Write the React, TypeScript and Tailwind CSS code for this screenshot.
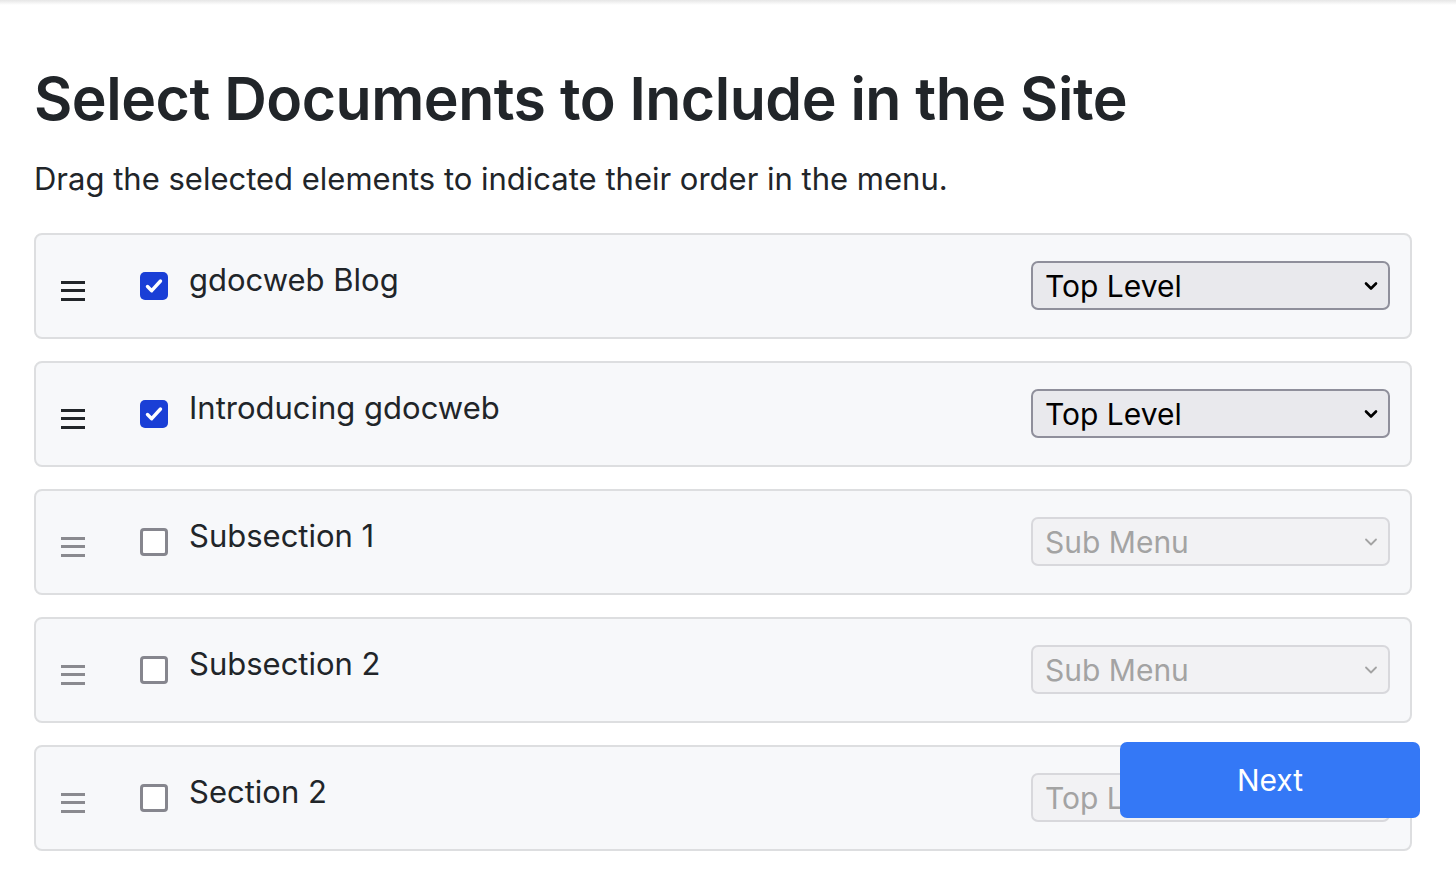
type Doc = { title: string; checked: boolean; level: string }

const docs: Doc[] = [
  { title: 'gdocweb Blog', checked: true, level: 'Top Level' },
  { title: 'Introducing gdocweb', checked: true, level: 'Top Level' },
  { title: 'Subsection 1', checked: false, level: 'Sub Menu' },
  { title: 'Subsection 2', checked: false, level: 'Sub Menu' },
  { title: 'Section 2', checked: false, level: 'Top Level' },
]

function Handle({ active }: { active: boolean }) {
  const color = active ? 'bg-[#212529]' : 'bg-[#8a8a8f]'
  return (
    <div className="mt-[10px] flex w-[24px] flex-col gap-[5.5px]">
      <span className={`h-[3px] w-full ${color}`} />
      <span className={`h-[3px] w-full ${color}`} />
      <span className={`h-[3px] w-full ${color}`} />
    </div>
  )
}

function Checkbox({ checked }: { checked: boolean }) {
  if (checked) {
    return (
      <div className="flex h-[28px] w-[28px] items-center justify-center rounded-[5px] bg-[#1a3fd6]">
        <svg width="22" height="22" viewBox="0 0 22 22" fill="none">
          <path d="M4.5 11.5l4.2 4.2L17.5 6" stroke="white" strokeWidth="3.4" strokeLinecap="round" strokeLinejoin="round" />
        </svg>
      </div>
    )
  }
  return <div className="h-[28px] w-[28px] rounded-[4px] border-[3px] border-[#86868e] bg-white" />
}

function LevelSelect({ value, disabled }: { value: string; disabled: boolean }) {
  return (
    <div
      className={`flex h-[49px] w-[359px] items-center justify-between rounded-[7px] border-2 pl-[12px] pr-[10px] text-[30px] ${
        disabled ? 'border-[#d8d8dc] bg-[#f2f2f4] text-[#a3a3a3]' : 'border-[#8f8f9b] bg-[#e9e9ed] text-black'
      }`}
    >
      <span className="leading-none">{value}</span>
      <svg width="14" height="10" viewBox="0 0 14 10" fill="none">
        <path
          d="M2 2.5l5 5 5-5"
          stroke={disabled ? '#a3a3a3' : '#000'}
          strokeWidth={disabled ? 1.8 : 2.6}
          strokeLinecap="round"
          strokeLinejoin="round"
        />
      </svg>
    </div>
  )
}

export default function App() {
  return (
    <div className="min-h-screen bg-white font-['Inter',sans-serif] text-[#212529]">
      <div className="h-[5px] bg-gradient-to-b from-[#e6e6e6] to-white" />
      <div className="px-[34px] pt-[59px]">
        <h1 className="text-[59px] font-semibold leading-[1.2] tracking-[-0.5px]">Select Documents to Include in the Site</h1>
        <p className="mt-[25px] text-[31px] leading-[1.2]">Drag the selected elements to indicate their order in the menu.</p>
        <div className="mt-[36px] flex w-[1378px] flex-col gap-[22px]">
          {docs.map((d) => (
            <div
              key={d.title}
              className="flex h-[106px] items-center rounded-[8px] border-2 border-[#dddee0] bg-[#f7f8fa] pl-[25px] pr-[20px]"
            >
              <Handle active={d.checked} />
              <div className="ml-[55px]">
                <Checkbox checked={d.checked} />
              </div>
              <span className="mb-[12px] ml-[21px] flex-1 text-[31px] leading-none">{d.title}</span>
              <LevelSelect value={d.level} disabled={!d.checked} />
            </div>
          ))}
        </div>
      </div>
      <button className="fixed bottom-[54px] right-[36px] h-[76px] w-[300px] rounded-[7px] bg-[#3478f6] text-[30px] text-white">
        Next
      </button>
    </div>
  )
}
